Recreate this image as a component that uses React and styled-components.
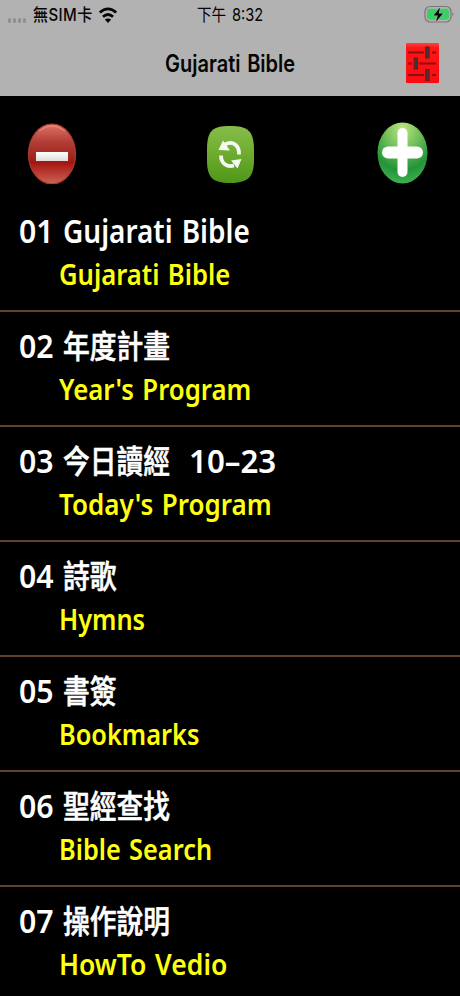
import React, { useLayoutEffect, useRef, useState } from 'react';
import styled, { createGlobalStyle } from 'styled-components';

const GlobalStyle = createGlobalStyle`
  * { box-sizing: border-box; }
  body { margin: 0; background: #000; overflow: hidden; }
`;
const Screen = styled.main`
  width: 460px; height: 996px; overflow: hidden; background: #000;
  font-family: "Noto Sans", "Noto Sans CJK TC", sans-serif;
`;
const Header = styled.header`
  height: 96px; background: #b2b2b2; color: #050505;
  font-family: Inter, "Noto Sans CJK TC", sans-serif;
`;
const StatusBar = styled.div`
  height: 31px; display: grid; grid-template-columns: 197px 1fr 36px;
`;
const Carrier = styled.div`display: flex; padding-left: 8px;`;
const Signal = styled.div`
  display: flex; gap: 2px; width: 25px; padding-top: 18px;
  i { width: 3px; height: 5px; border-radius: 1.5px; background: #8f8f8f; }
`;
const WifiIcon = styled.svg`width: 20px; height: 18px; margin: 6px 0 0 5px;`;
const BatteryIcon = styled.svg`width: 32px; height: 20px; margin-top: 5px;`;
const NavBar = styled.div`
  height: 65px; display: flex; justify-content: space-between; padding: 11px 20px 0 165px;
`;
const SettingsIcon = styled.svg`width: 35px; height: 43px;`;
const Tools = styled.nav`
  height: 101px; display: grid; grid-template-columns: 178px 172px 51px; padding: 26px 0 0 27px;
`;
const ToolIcon = styled.svg`width: ${p => p.$w}px; height: 62px;`;
const List = styled.ul`list-style: none; margin: 0; padding: 0;`;
const Row = styled.li`height: 115px; border-bottom: 2px solid #60432a; padding: 12px 0 0 19px;`;
const TitleLine = styled.div`
  display: flex; height: 44px; color: #fff; font-size: 32px; font-weight: 560; line-height: 44px;
`;
const Subtitle = styled.div`
  height: 42px; padding-left: 40px; color: #ffff10; font-size: 29.5px; font-weight: 600; line-height: 42px;
`;
const Slot = styled.span`
  display: block; flex: none; width: ${p => p.$width}px; margin-left: ${p => p.$gap || 0}px;
  font-size: ${p => p.$size || 'inherit'}; font-weight: ${p => p.$weight || 'inherit'};
  line-height: ${p => p.$line || 'inherit'}; letter-spacing: ${p => p.$tracking || 0};
  -webkit-text-stroke: ${p => p.$stroke || 0} currentColor;
`;
const Glyphs = styled.span`
  display: inline-block; white-space: pre; word-spacing: 2px; transform-origin: 0 50%;
`;

function FitText({ children, ...slot }) {
  const ref = useRef(null);
  const [scale, setScale] = useState(1);
  useLayoutEffect(() => {
    setScale(slot.$width / ref.current.offsetWidth);
  }, [children, slot.$width]);
  return <Slot {...slot}><Glyphs ref={ref} style={{ transform: `scaleX(${scale})` }}>{children}</Glyphs></Slot>;
}

const items = [
  { no: '01', title: 'Gujarati Bible', width: 187, weight: 560, sub: 'Gujarati Bible', subWidth: 171 },
  { no: '02', title: '年度計畫', width: 107, sub: "Year's Program", subWidth: 192 },
  { no: '03', title: '今日讀經', width: 107, date: '10–23', sub: "Today's Program", subWidth: 213 },
  { no: '04', title: '詩歌', width: 53.5, sub: 'Hymns', subWidth: 86 },
  { no: '05', title: '書簽', width: 53.5, sub: 'Bookmarks', subWidth: 140 },
  { no: '06', title: '聖經查找', width: 107, sub: 'Bible Search', subWidth: 153 },
  { no: '07', title: '操作說明', width: 107, sub: 'HowTo Vedio', subWidth: 168 },
];

function Wifi() {
  return <WifiIcon viewBox="0 0 20 18" fill="none" stroke="#050505" strokeWidth="2.8">
    <path d="M1.8 6.5Q10 -.7 18.2 6.5M5 10.7Q10 6.2 15 10.7" />
    <path d="M10 17 6.8 13.6Q10 11.2 13.2 13.6Z" fill="#050505" stroke="none" />
  </WifiIcon>;
}
function Battery() {
  return <BatteryIcon viewBox="0 0 32 20">
    <rect x="1" y="1.5" width="26" height="15.5" rx="5" fill="none" stroke="#777" strokeWidth="1.2" />
    <rect x="3" y="3.8" width="22" height="11" rx="3" fill="#38cf63" />
    <path d="M28.5 7.3q2 2 0 4.2z" fill="#777" />
    <path d="M16 2.5 9.5 10.5h4.2L12 16.8 19 8.5h-4.2z" fill="#050505" stroke="#b2b2b2" strokeWidth="1.2" paintOrder="stroke" />
  </BatteryIcon>;
}
function Settings() {
  return <SettingsIcon viewBox="0 0 35 43">
    <defs><linearGradient id="set" x2="0" y2="1"><stop stopColor="#fa4444" /><stop offset=".12" stopColor="#ff1616" /><stop offset="1" stopColor="#fa0b12" /></linearGradient></defs>
    <rect x="1" y="1" width="33" height="40" rx="1" fill="url(#set)" />
    <path d="M3 10.5h16M27 10.5h4M3 21.5h4M14 21.5h17M3 33h16M27 33h4" stroke="#8c0c10" strokeWidth="1.8" />
    <path d="M20.8 5h3.2v11h-3.2zM9.3 16h3.2v11h-3.2zM20.8 27.5h3.2v11h-3.2z" fill="#303d38" stroke="#701719" strokeWidth="1.2" />
  </SettingsIcon>;
}
function Remove() {
  return <ToolIcon $w={50} viewBox="0 0 50 62">
    <defs>
      <linearGradient id="minus" x2="0" y2="1"><stop stopColor="#df7468" /><stop offset=".3" stopColor="#b33d34" /><stop offset=".52" stopColor="#a02a20" /><stop offset=".64" stopColor="#a51510" /><stop offset="1" stopColor="#cf6356" /></linearGradient>
      <linearGradient id="bar" x2="0" y2="1"><stop stopColor="#fff" /><stop offset="1" stopColor="#ddd" /></linearGradient>
    </defs>
    <ellipse cx="25" cy="32" rx="23.5" ry="30" fill="url(#minus)" stroke="#a63a30" strokeWidth="1.2" />
    <path d="M12 9Q25 -1 38 9" fill="none" stroke="#f0a094" strokeWidth="1.5" opacity=".5" />
    <rect x="9" y="30" width="32" height="9" fill="url(#bar)" />
  </ToolIcon>;
}
function Refresh() {
  return <ToolIcon $w={50} viewBox="0 0 50 62">
    <defs><linearGradient id="refresh" x2="0" y2="1"><stop stopColor="#86bd4a" /><stop offset=".45" stopColor="#70ad32" /><stop offset="1" stopColor="#4f9718" /></linearGradient></defs>
    <path d="M25 4C43 4 49 9 49 28V38C49 55 43 61 25 61S2 55 2 38V28C2 9 7 4 25 4Z" fill="url(#refresh)" />
    <path d="M20 22.5C28 18 34.5 23.5 34 32.5M16 33.5C16 41.5 22 45.5 29 43.5" fill="none" stroke="#f5faf0" strokeWidth="3.8" />
    <path d="M18 18.5 25 28.5 13.5 28ZM26 38.5 36.5 37 32.5 46.5Z" fill="#f5faf0" />
  </ToolIcon>;
}
function Add() {
  return <ToolIcon $w={51} viewBox="0 0 51 62">
    <defs><radialGradient id="plus" cx=".5" cy=".1" r=".95"><stop stopColor="#bfe681" /><stop offset=".42" stopColor="#65b954" /><stop offset=".72" stopColor="#239438" /><stop offset="1" stopColor="#43b958" /></radialGradient></defs>
    <ellipse cx="25.5" cy="31" rx="25" ry="30.5" fill="url(#plus)" />
    <path d="M25.5 11V50" stroke="#fff" strokeWidth="10" strokeLinecap="round" />
    <path d="M11 30.5H40" stroke="#fff" strokeWidth="12" strokeLinecap="round" />
  </ToolIcon>;
}

export default function App() {
  return <><GlobalStyle /><Screen>
    <Header>
      <StatusBar>
        <Carrier><Signal><i /><i /><i /><i /></Signal><FitText $width={60} $size="17px" $weight={450} $tracking=".5px" $line="30px">無SIM卡</FitText><Wifi /></Carrier>
        <FitText $width={66} $size="17.5px" $weight={400} $line="30px">下午 8:32</FitText>
        <Battery />
      </StatusBar>
      <NavBar><FitText $width={130} $size="24px" $weight={600} $line="43px">Gujarati Bible</FitText><Settings /></NavBar>
    </Header>
    <Tools><Remove /><Refresh /><Add /></Tools>
    <List>{items.map(item => <Row key={item.no}>
      <TitleLine>
        <FitText $width={35}>{item.no}</FitText>
        <FitText $width={item.width} $gap={9} $weight={item.weight || 500} $stroke={item.weight ? 0 : '.6px'}>{item.title}</FitText>
        {item.date && <FitText $width={87} $gap={19}>{item.date}</FitText>}
      </TitleLine>
      <Subtitle><FitText $width={item.subWidth}>{item.sub}</FitText></Subtitle>
    </Row>)}</List>
  </Screen></>;
}
